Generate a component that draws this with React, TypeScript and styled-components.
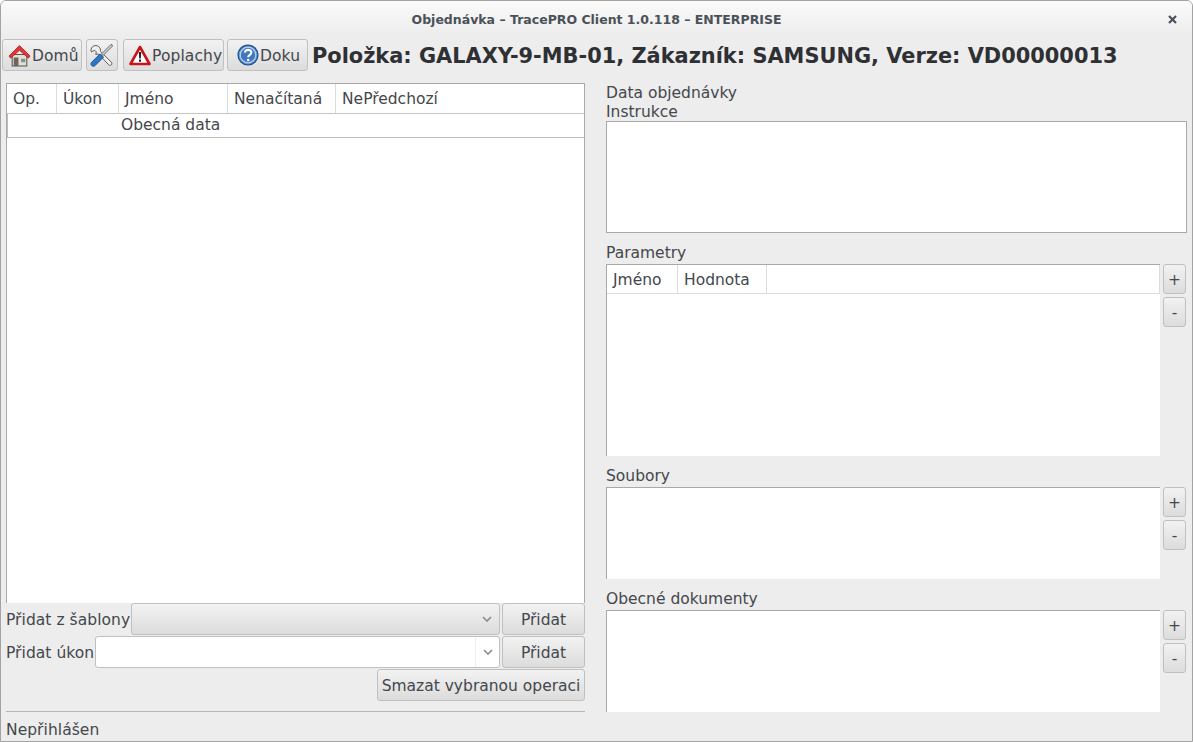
import React from "react";
import styled, { createGlobalStyle } from "styled-components";

const Global = createGlobalStyle`
  html, body { margin: 0; padding: 0; background: #fff; }
  #root { width: 1193px; height: 742px; }
  * { box-sizing: border-box; }
`;

const Win = styled.div`
  width: 1193px; height: 742px;
  display: flex; flex-direction: column;
  background: #ededed;
  border: 1px solid #a3a3a3;
  border-radius: 6px 6px 0 0;
  overflow: hidden;
  font-family: "DejaVu Sans", sans-serif;
  font-size: 15.5px;
  color: #44474c;
`;
const TitleBar = styled.div`
  height: 38px; flex: none;
  display: flex; align-items: center; justify-content: center;
  position: relative;
  background: linear-gradient(#fafafa, #ededed 90%);
  font-size: 12.5px; font-weight: bold; color: #4a5158;
  padding-bottom: 1px;
`;
const Close = styled.svg`
  position: absolute; right: 15px; top: 14px;
`;
const Toolbar = styled.div`
  height: 32px; flex: none; margin-left: 1px;
  display: flex; align-items: center;
`;
const ToolBtn = styled.div<{ $w: number; $ml?: number; $pl: number }>`
  width: ${p => p.$w}px; height: 32px; margin-left: ${p => p.$ml ?? 0}px; flex: none;
  display: flex; align-items: center; gap: 1px; padding-left: ${p => p.$pl}px;
  border: 1px solid #c0c0c0; border-radius: 3px;
  background: linear-gradient(#f2f2f2, #dcdcdc);
`;
const ToolText = styled.span`
  padding-top: 1px; letter-spacing: 0.1px;
`;
const Heading = styled.div`
  margin-left: 4px; padding-top: 2px; font-size: 20.9px; font-weight: bold; color: #2e3033; white-space: nowrap;
`;
const Main = styled.div`
  flex: 1; min-height: 0; display: flex; margin-top: 12px;
`;
const Left = styled.div`
  width: 579px; margin-left: 5px; flex: none; display: flex; flex-direction: column;
`;
const Right = styled.div`
  width: 581px; margin-left: 21px; flex: none; display: flex; flex-direction: column;
  height: 629px;
`;
const OrderTable = styled.div`
  height: 520px; flex: none; background: #fff;
  border: 1px solid #a9a9a9; border-bottom: none;
`;
const Head = styled.div`
  display: flex; height: 30px; background: #fff; border-bottom: 1px solid #c4c4c4;
`;
const Th = styled.div<{ $w: number; $last?: boolean }>`
  width: ${p => p.$w}px; flex: none; padding: 6px 0 0 6px;
  border-right: ${p => (p.$last ? "none" : "1px solid #dcdcdc")}; white-space: nowrap;
  line-height: 18px;
`;
const GroupRow = styled.div`
  height: 24px; border-bottom: 1px solid #bdbdbd; border-left: 1px solid #bdbdbd;
  padding: 2px 0 0 113px; white-space: nowrap; line-height: 18px;
`;
const FormRow = styled.div`
  height: 33px; flex: none; display: flex; align-items: flex-start; justify-content: flex-end;
`;
const FormLabel = styled.div`
  flex: none; line-height: 34px; white-space: nowrap; letter-spacing: 0.05px;
`;
const Combo = styled.div<{ $edit?: boolean }>`
  flex: 1; height: 32px; margin-left: 1px; display: flex; justify-content: flex-end; align-items: center;
  border: 1px solid #c0c0c0; border-radius: 3px;
  background: ${p => (p.$edit ? "#fff" : "linear-gradient(#f2f2f2, #dcdcdc)")};
`;
const Arrow = styled.div<{ $edit?: boolean }>`
  width: 24px; height: 100%; display: flex; align-items: center; justify-content: center;
  border-left: ${p => (p.$edit ? "1px solid #eeeeee" : "none")};
`;
const Btn = styled.div<{ $w: number }>`
  width: ${p => p.$w}px; height: 32px; flex: none; margin-left: 2px; padding-top: 1px;
  display: flex; align-items: center; justify-content: center; white-space: nowrap;
  border: 1px solid #c0c0c0; border-radius: 3px;
  background: linear-gradient(#f2f2f2, #dcdcdc);
`;
const Sep = styled.div`
  height: 1px; background: #b5b5b5; margin-top: 9px; flex: none;
`;
const Label = styled.div<{ $gap?: boolean }>`
  height: ${p => (p.$gap ? 31 : 19)}px; padding-top: ${p => (p.$gap ? 11 : 1)}px;
  line-height: 19px; flex: none; white-space: nowrap;
`;
const TextBox = styled.div`
  height: 112px; flex: none; background: #fff; border: 1px solid #a9a9a9;
`;
const Row = styled.div<{ $h: number }>`
  height: ${p => p.$h}px; flex: none; display: flex;
`;
const ListBox = styled.div`
  width: 554px; flex: none; background: #fff;
  border-top: 1px solid #a9a9a9; border-left: 1px solid #a9a9a9;
`;
const ParamHead = styled.div`
  display: flex; height: 29px; border-bottom: 1px solid #dcdcdc; border-right: 1px solid #dcdcdc;
`;
const Side = styled.div`
  width: 27px; flex: none; display: flex; flex-direction: column; gap: 3px; padding-left: 3px;
`;
const Small = styled.div`
  width: 23px; height: 30px; padding-top: 1px;
  display: flex; align-items: center; justify-content: center;
  border: 1px solid #c0c0c0; border-radius: 3px;
  background: linear-gradient(#f2f2f2, #dcdcdc);
`;
const Status = styled.div`
  height: 29px; flex: none; margin-left: 5px; line-height: 36px; letter-spacing: 0.05px;
`;

const Chev = () => (
  <svg width="10" height="6" viewBox="0 0 10 6">
    <path d="M1 1l4 4 4-4" fill="none" stroke="#8a8a8a" strokeWidth="1.6" />
  </svg>
);
const House = () => (
  <svg width="23" height="23" viewBox="0 0 22 22">
    <path d="M4 10h14v11H4z" fill="#e4dfd2" stroke="#55534c" />
    <path d="M5.500 13h4.500v8H5.500z" fill="#6b665c" />
    <path d="M12.500 14h4v3.500h-4z" fill="#7d8fa3" />
    <path d="M1 11.500L11 1.500l10 10-1.500 2L11 6l-8.500 7.500z" fill="#e8373a" stroke="#a31c1f" strokeWidth=".8" strokeLinejoin="round" />
  </svg>
);
const Tools = () => (
  <svg width="25" height="25" viewBox="0 0 24 24">
    <path d="M5.500 2.500a4.500 4.500 0 0 0-3.300 6l3.300-1.500 1.500 1.500-.5 2.500 2.500-.5L19 21c1.500 1.500 4 -.5 2.500-2.500L11 8c.5-3-2-6-5.500-5.500z" fill="#f0f0f0" stroke="#555" strokeWidth=".9" />
    <path d="M21 1.500l-9 9 1.500 1.500 9-9-.5-1.500z" fill="#cfd3d6" stroke="#555" strokeWidth=".8" />
    <path d="M10.500 10.500L2.500 18.500c-1.300 1.300-.5 3 .5 3.500s2 .5 3-.5L14 13.500z" fill="#2f76c4" stroke="#164a85" strokeWidth=".8" />
  </svg>
);
const Warn = () => (
  <svg width="22" height="21" viewBox="0 0 22 21">
    <path d="M11 2L20.500 19H1.500z" fill="#fff" stroke="#c8141c" strokeWidth="2.600" strokeLinejoin="round" />
    <path d="M9.800 7h2.400l-.4 6.500h-1.600zM10 14.600h2v2.200h-2z" fill="#222" />
  </svg>
);
const Help = () => (
  <svg width="22" height="22" viewBox="0 0 21 21">
    <circle cx="10.500" cy="10.500" r="9.500" fill="#6b9ad2" stroke="#1f4f8f" strokeWidth="1.200" />
    <circle cx="10.500" cy="10.500" r="7.400" fill="#3f78bf" stroke="#c2d6ec" strokeWidth="1" />
    <path d="M7.500 8.200c.3-3.400 6.300-3.400 6.200 0 0 2.300-3 2.100-3 4.400" fill="none" stroke="#fff" strokeWidth="2" />
    <circle cx="10.700" cy="15.300" r="1.200" fill="#fff" />
  </svg>
);

export default function App() {
  return (
    <>
      <Global />
      <Win>
        <TitleBar>
          Objednávka – TracePRO Client 1.0.118 – ENTERPRISE
          <Close width="9" height="9" viewBox="0 0 9 9">
            <path d="M1 1l7 7M8 1l-7 7" stroke="#4a5158" strokeWidth="2.200" />
          </Close>
        </TitleBar>
        <Toolbar>
          <ToolBtn $w={80} $pl={5}><House /><ToolText>Domů</ToolText></ToolBtn>
          <ToolBtn $w={32} $ml={4} $pl={2}><Tools /></ToolBtn>
          <ToolBtn $w={101} $ml={5} $pl={5}><Warn /><ToolText>Poplachy</ToolText></ToolBtn>
          <ToolBtn $w={81} $ml={3} $pl={9}><Help /><ToolText>Doku</ToolText></ToolBtn>
          <Heading>Položka: GALAXY-9-MB-01, Zákazník: SAMSUNG, Verze: VD00000013</Heading>
        </Toolbar>
        <Main>
          <Left>
            <OrderTable>
              <Head>
                <Th $w={50}>Op.</Th>
                <Th $w={62}>Úkon</Th>
                <Th $w={109}>Jméno</Th>
                <Th $w={108}>Nenačítaná</Th>
                <Th $w={248} $last>NePředchozí</Th>
              </Head>
              <GroupRow>Obecná data</GroupRow>
            </OrderTable>
            <FormRow>
              <FormLabel>Přidat z šablony</FormLabel>
              <Combo><Arrow><Chev /></Arrow></Combo>
              <Btn $w={83}>Přidat</Btn>
            </FormRow>
            <FormRow>
              <FormLabel>Přidat úkon</FormLabel>
              <Combo $edit><Arrow $edit><Chev /></Arrow></Combo>
              <Btn $w={83}>Přidat</Btn>
            </FormRow>
            <FormRow>
              <Btn $w={208}>Smazat vybranou operaci</Btn>
            </FormRow>
            <Sep />
          </Left>
          <Right>
            <Label>Data objednávky</Label>
            <Label>Instrukce</Label>
            <TextBox />
            <Label $gap>Parametry</Label>
            <Row $h={192}>
              <ListBox>
                <ParamHead>
                  <Th $w={71}>Jméno</Th>
                  <Th $w={89}>Hodnota</Th>
                </ParamHead>
              </ListBox>
              <Side><Small>+</Small><Small>-</Small></Side>
            </Row>
            <Label $gap>Soubory</Label>
            <Row $h={92}>
              <ListBox />
              <Side><Small>+</Small><Small>-</Small></Side>
            </Row>
            <Label $gap>Obecné dokumenty</Label>
            <Row $h={102}>
              <ListBox />
              <Side><Small>+</Small><Small>-</Small></Side>
            </Row>
          </Right>
        </Main>
        <Status>Nepřihlášen</Status>
      </Win>
    </>
  );
}
